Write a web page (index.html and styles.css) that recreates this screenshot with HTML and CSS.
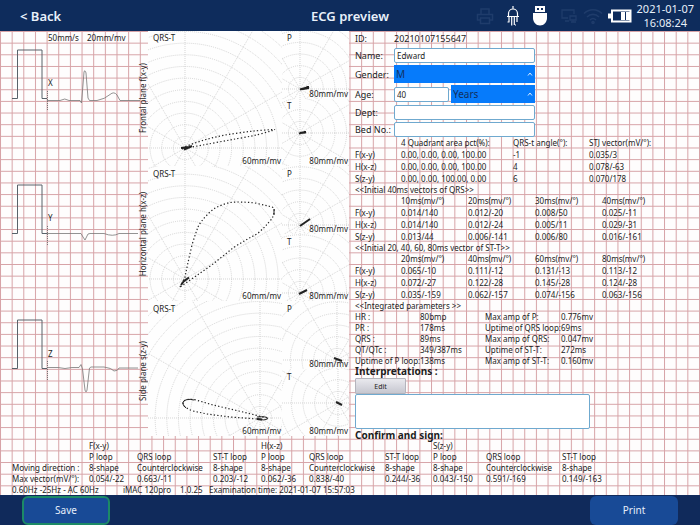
FILE: index.html
```html
<!DOCTYPE html>
<html lang="en">
<head>
    <meta charset="UTF-8">
    <meta name="viewport" content="width=device-width, initial-scale=1.0">
    <title>ECG preview</title>
    <link rel="stylesheet" href="styles.css">
</head>
<body>
    <header class="topbar">
        <a class="back" href="#">&lt; Back</a>
        <h1>ECG preview</h1>
        <div class="status">
            <svg class="dim spaced" width="18" height="18" viewBox="0 0 18 18" fill="none" stroke-width="1.500">
                <path d="M5 7V2h8v5M4 13H1.500V7.500h15V13H14M4.500 11h9v5.500h-9z"/>
            </svg>
            <svg class="lit spaced" width="14" height="20" viewBox="0 0 14 20" fill="none" stroke-width="1.200">
                <path d="M7 0v3M2.500 10V7.500a4.500 4.500 0 0 1 9 0V10M1 10.500h12M3 11v5M5.700 11v8.500M8.300 11v8M11 11v5M1.500 16h2M9 19h1"/>
            </svg>
            <svg class="lit spaced" width="16" height="20" viewBox="0 0 16 20">
                <path fill="#fff" stroke="none" d="M1 7h14v5c0 4-3 7.500-7 7.500S1 16 1 12z"/>
                <path fill="#fff" stroke="none" fill-rule="evenodd" d="M3 0h10v6H3zM5 2v2h2V2zM9 2v2h2V2z"/>
            </svg>
            <svg class="dim" width="18" height="18" viewBox="0 0 18 18" fill="none" stroke-width="1.300">
                <path d="M8 11H2V3h12v4M5 14h4M10 9h6v4h-6zM13 13v2M11 15h5"/>
            </svg>
            <svg class="dim" width="20" height="18" viewBox="0 0 20 18" fill="none" stroke-width="1.600">
                <path d="M1 6.500c5-5 13-5 18 0M4 10c3.500-3.500 8.500-3.500 12 0M7 13c2-2 4-2 6 0"/>
                <circle cx="10" cy="15.500" r="1"/>
            </svg>
            <svg class="lit" width="24" height="14" viewBox="0 0 24 14">
                <path fill="#fff" stroke="none" d="M0 4.500h3v5H0z"/>
                <rect x="4" y="1.500" width="18.500" height="11" fill="none" stroke-width="2"/>
                <path fill="#fff" stroke="none" d="M13 3h4v8h-4zM18 3h4v8h-4z"/>
            </svg>
            <time datetime="2021-01-07T16:08:24">2021-01-07<br>16:08:24</time>
        </div>
    </header>

    <main class="sheet">
        <svg class="paper" aria-hidden="true">
            <defs>
                <pattern id="mm" width="11.650" height="11.650" patternUnits="userSpaceOnUse">
                    <path d="M0 .5H11.650M.5 0V11.650"/>
                </pattern>
            </defs>
            <rect width="100%" height="100%" fill="url(#mm)"/>
        </svg>

        <div class="upper">
            <div class="planes">
                <!-- Frontal plane -->
                <svg class="lead" viewBox="0 0 148 135">
                    <text x="48" y="10">50mm/s</text>
                    <text x="87" y="10">20mm/mv</text>
                    <text x="48" y="55">X</text>
                    <path class="pulse" d="M12 67.500H17.500V19H42V67.500H47"/>
                    <path class="axis" d="M47.500 60V80"/>
                    <path class="wave" d="M47 69.500H60Q65 66.500 69 69.500H80L81.500 72L84 41Q85 38 86 42L88 67L89.500 69.500H97Q105 68 110 63.500Q114 60 117 64L120 69.500H140"/>
                    <text class="turned" transform="translate(146 67) rotate(-90)">Frontal plane f(x-y)</text>
                </svg>
                <svg class="plot" viewBox="0 0 134 135" data-cx="37" data-cy="117">
                    <path class="loop" d="M34 117Q60 106 87 102.500Q110 99 127 98.500Q112 104 90 107.500Q65 112 34 118"/>
                    <path class="blob" d="M33 117L42 116L36 118.500L44 115"/>
                    <text x="5" y="10">QRS-T</text>
                    <text class="end" x="133" y="133">60mm/mv</text>
                </svg>
                <div class="pair">
                    <svg class="plot" viewBox="0 0 67 68" data-cx="18" data-cy="58">
                        <path class="blob" d="M18 58.500L27 56L21 58L27 57"/>
                        <text x="5" y="10">P</text>
                        <text class="end" x="66" y="66">80mm/mv</text>
                    </svg>
                    <svg class="plot" viewBox="0 0 67 67" data-cx="18" data-cy="34">
                        <path class="blob" d="M17 34.500L24 33L18 34L24 33.500"/>
                        <text x="5" y="10">T</text>
                        <text class="end" x="66" y="65">80mm/mv</text>
                    </svg>
                </div>

                <!-- Horizontal plane -->
                <svg class="lead" viewBox="0 0 148 135">
                    <text x="48" y="55">Y</text>
                    <path class="pulse" d="M12 67.500H17.500V19H42V67.500H47"/>
                    <path class="axis" d="M47.500 60V80"/>
                    <path class="wave" d="M47 67.500H81L83 71L85 74L88 68L90 67.500H104Q113 71 119 67.500H138"/>
                    <text class="turned" transform="translate(146 68) rotate(-90)">Horizontal plane h(x-z)</text>
                </svg>
                <svg class="plot" viewBox="0 0 134 135" data-cx="37" data-cy="113">
                    <path class="loop" d="M32 121L37 111Q40 96 44 79Q47 69 50 61Q53 55 59 49Q65 42 74 39Q81 36 89 36Q98 36 107 37Q116 39 124 41Q127 42 126 46Q126 51 121 56Q116 62 109 68Q97 74 85 82L65 98L45 112Z"/>
                    <path class="blob" d="M33 119L36 115L41 111.500L35 116"/>
                    <path class="blob thin" d="M126 43V49"/>
                    <text x="5" y="11">QRS-T</text>
                    <text class="end" x="133" y="133">60mm/mv</text>
                </svg>
                <div class="pair">
                    <svg class="plot" viewBox="0 0 67 68" data-cx="18" data-cy="59">
                        <path class="blob" d="M18 60L28 53"/>
                        <text x="5" y="11">P</text>
                        <text class="end" x="66" y="66">80mm/mv</text>
                    </svg>
                    <svg class="plot" viewBox="0 0 67 67" data-cx="18" data-cy="59">
                        <path class="blob" d="M17 60L25 56"/>
                        <text x="5" y="11">T</text>
                        <text class="end" x="66" y="65">80mm/mv</text>
                    </svg>
                </div>

                <!-- Side plane -->
                <svg class="lead" viewBox="0 0 148 135">
                    <text x="48" y="56">Z</text>
                    <path class="pulse" d="M12 67.500H17.500V19H42V67.500H47"/>
                    <path class="axis" d="M47.500 60V80"/>
                    <path class="wave" d="M47 66.500H58Q65 68.500 72 66.500H79L81 63.500L82.500 68L85 89Q86 93 87 89L89.500 67L91 66H104Q112 67 114 70Q118 70 119 67H138"/>
                    <text class="turned" transform="translate(146 70) rotate(-90)">Side plane s(z-y)</text>
                </svg>
                <svg class="plot" viewBox="0 0 134 135" data-cx="112" data-cy="117">
                    <path class="loop" d="M119 117L95 111L65 104L48 99Q38 97 35 101Q34 106 45 110L59 113L82 116L109 118"/>
                    <path class="blob thin" d="M46 99Q38 97 35 101Q34 104 38 107M109 116Q119 115 120 117.500Q117 120 109 118"/>
                    <path class="blob" d="M109 118L114 118.500"/>
                    <text x="5" y="11">QRS-T</text>
                    <text class="end" x="133" y="133">60mm/mv</text>
                </svg>
                <div class="pair">
                    <svg class="plot" viewBox="0 0 67 68" data-cx="55" data-cy="59">
                        <path class="blob" d="M52 57L60 60"/>
                        <text x="5" y="11">P</text>
                        <text class="end" x="66" y="66">80mm/mv</text>
                    </svg>
                    <svg class="plot" viewBox="0 0 67 67" data-cx="56" data-cy="34">
                        <path class="blob" d="M54 33L60 36"/>
                        <text x="5" y="11">T</text>
                        <text class="end" x="66" y="65">80mm/mv</text>
                    </svg>
                </div>
            </div>

            <section class="details">
                <form class="patient">
                    <span>ID:</span>
                    <output class="pid">20210107155647</output>

                    <label for="name">Name:</label>
                    <input type="text" id="name" value="Edward">

                    <label for="gender">Gender:</label>
                    <div class="picker">
                        <select id="gender"><option>M</option><option>F</option></select>
                        <svg width="6" height="4" viewBox="0 0 6 4"><path d="M1 3.500L3 1L5 3.500"/></svg>
                    </div>

                    <label for="age">Age:</label>
                    <div class="age-row">
                        <input type="text" id="age" value="40">
                        <div class="picker">
                            <select aria-label="Age unit"><option>Years</option><option>Months</option></select>
                            <svg width="6" height="4" viewBox="0 0 6 4"><path d="M1 3.500L3 1L5 3.500"/></svg>
                        </div>
                    </div>

                    <label for="dept">Dept:</label>
                    <input type="text" id="dept">

                    <label for="bed">Bed No.:</label>
                    <input type="text" id="bed">
                </form>

                <table class="quadrants">
                    <tr class="head"><td></td><th>4 Quadrant area pct(%):</th><th>QRS-t angle(°):</th><th>STJ vector(mV/°):</th></tr>
                    <tr><th>F(x-y)</th><td>0.00, 0.00, 0.00, 100.00</td><td>-1</td><td>0.035/3</td></tr>
                    <tr><th>H(x-z)</th><td>0.00, 0.00, 0.00, 100.00</td><td>4</td><td>0.078/-63</td></tr>
                    <tr><th>S(z-y)</th><td>0.00, 0.00, 100.00, 0.00</td><td>6</td><td>0.070/178</td></tr>
                </table>

                <table class="vectors">
                    <caption>&lt;&lt;Initial 40ms vectors of QRS&gt;&gt;</caption>
                    <tr class="head"><td></td><th>10ms(mv/°)</th><th>20ms(mv/°)</th><th>30ms(mv/°)</th><th>40ms(mv/°)</th></tr>
                    <tr><th>F(x-y)</th><td>0.014/140</td><td>0.012/-20</td><td>0.008/50</td><td>0.025/-11</td></tr>
                    <tr><th>H(x-z)</th><td>0.014/140</td><td>0.012/-24</td><td>0.005/11</td><td>0.029/-31</td></tr>
                    <tr><th>S(z-y)</th><td>0.013/44</td><td>0.006/-141</td><td>0.006/80</td><td>0.016/-161</td></tr>
                </table>

                <table class="vectors">
                    <caption>&lt;&lt;Initial 20, 40, 60, 80ms vector of ST-T&gt;&gt;</caption>
                    <tr class="head"><td></td><th>20ms(mv/°)</th><th>40ms(mv/°)</th><th>60ms(mv/°)</th><th>80ms(mv/°)</th></tr>
                    <tr><th>F(x-y)</th><td>0.065/-10</td><td>0.111/-12</td><td>0.131/-13</td><td>0.113/-12</td></tr>
                    <tr><th>H(x-z)</th><td>0.072/-27</td><td>0.122/-28</td><td>0.145/-28</td><td>0.124/-28</td></tr>
                    <tr><th>S(z-y)</th><td>0.035/-159</td><td>0.062/-157</td><td>0.074/-156</td><td>0.063/-156</td></tr>
                </table>

                <table class="params">
                    <caption>&lt;&lt;Integrated parameters &gt;&gt;</caption>
                    <tr><th>HR :</th><td>80bmp</td><th>Max amp of P:</th><td>0.776mv</td></tr>
                    <tr><th>PR :</th><td>178ms</td><th>Uptime of QRS loop:</th><td>69ms</td></tr>
                    <tr><th>QRS :</th><td>89ms</td><th>Max amp of QRS:</th><td>0.047mv</td></tr>
                    <tr><th>QT/QTc :</th><td>349/387ms</td><th>Uptime of ST-T:</th><td>272ms</td></tr>
                    <tr><th>Uptime of P loop:</th><td>138ms</td><th>Max amp of ST-T:</th><td>0.160mv</td></tr>
                </table>

                <label class="title" for="notes">Interpretations :</label>
                <button class="edit" type="button">Edit</button>
                <textarea id="notes"></textarea>
                <h2 class="title">Confirm and sign:</h2>
            </section>
        </div>

        <table class="loops">
            <colgroup>
                <col class="name"><col class="p"><col class="qrs"><col class="st">
                <col class="p"><col class="qrs"><col class="st">
                <col class="p-wide"><col class="qrs"><col>
            </colgroup>
            <tr><td></td><th colspan="3">F(x-y)</th><th colspan="3">H(x-z)</th><th colspan="3">S(z-y)</th></tr>
            <tr><td></td><th>P loop</th><th>QRS loop</th><th>ST-T loop</th><th>P loop</th><th>QRS loop</th><th>ST-T loop</th><th>P loop</th><th>QRS loop</th><th>ST-T loop</th></tr>
            <tr><th>Moving direction :</th><td>8-shape</td><td>Counterclockwise</td><td>8-shape</td><td>8-shape</td><td>Counterclockwise</td><td>8-shape</td><td>8-shape</td><td>Counterclockwise</td><td>8-shape</td></tr>
            <tr><th>Max vector(mV/°):</th><td>0.054/-22</td><td>0.663/-11</td><td>0.203/-12</td><td>0.062/-36</td><td>0.838/-40</td><td>0.244/-36</td><td>0.043/-150</td><td>0.591/-169</td><td>0.149/-163</td></tr>
        </table>
        <div class="device">
            <span class="filter">0.60Hz -25Hz - AC 60Hz</span>
            <span class="model">iMAC 120pro</span>
            <span class="version">1.0.25</span>
            <span>Examination time: 2021-01-07 15:57:03</span>
        </div>
    </main>

    <footer class="actions">
        <button class="save" type="button">Save</button>
        <button type="button">Print</button>
    </footer>

    <script>
        const NS = 'http://www.w3.org/2000/svg';
        const STEP = 11.65;

        // polar grid behind each loop
        document.querySelectorAll('.plot').forEach(svg => {
            const cx = Number(svg.dataset.cx);
            const cy = Number(svg.dataset.cy);
            const g = document.createElementNS(NS, 'g');
            g.setAttribute('class', 'rings');
            for (let i = 1; i < 15; i++) {
                const c = document.createElementNS(NS, 'circle');
                c.setAttribute('cx', cx);
                c.setAttribute('cy', cy);
                c.setAttribute('r', i * STEP);
                g.appendChild(c);
            }
            for (let a = 0; a < 180; a += 30) {
                const dx = 200 * Math.cos(a * Math.PI / 180);
                const dy = 200 * Math.sin(a * Math.PI / 180);
                const l = document.createElementNS(NS, 'path');
                l.setAttribute('d', `M${cx - dx} ${cy - dy}L${cx + dx} ${cy + dy}`);
                g.appendChild(l);
            }
            svg.prepend(g);
        });
    </script>
</body>
</html>
```
FILE: styles.css
```css
* {
    box-sizing: border-box;
}
body {
    margin: 0;
    min-height: 100vh;
    display: flex;
    flex-direction: column;
    font-family: "Noto Sans", "Open Sans", sans-serif;
    font-size: 8px;
    line-height: 11px;
    color: #1c1c1c;
    background: #fefdfd;
}
input, select, textarea, button {
    font-family: inherit;
    color: inherit;
    margin: 0;
}

/* Top bar */
.topbar {
    display: grid;
    grid-template-columns: 1fr auto 1fr;
    align-items: center;
    height: 31px;
    padding: 0 6px 0 20px;
    background: #0e2c5c;
    color: #e8f0fa;
}
.topbar h1, .back {
    margin: 0;
    font-size: 13px;
    line-height: 16px;
    font-weight: 600;
    color: inherit;
    text-decoration: none;
}
.topbar h1 {
    padding-right: 14px;
}
.status {
    display: flex;
    justify-content: flex-end;
    align-items: center;
    gap: 5px;
}
.status time {
    font-size: 11px;
    line-height: 14px;
    text-align: center;
}
.spaced {
    margin-right: 7px;
}
.dim {
    stroke: #1f3c6b;
}
.lit {
    stroke: #fff;
}

/* Chart sheet */
.sheet {
    position: relative;
    flex: 1;
}
.paper {
    position: absolute;
    inset: 0;
    width: 100%;
    height: 100%;
}
.paper path {
    stroke: #d6a2a6;
    fill: none;
}
.upper, .loops, .device {
    position: relative;
}
.upper {
    display: flex;
    gap: 6px;
}
.planes {
    display: grid;
    grid-template-columns: 148px 134px 67px;
    align-content: start;
}
.planes svg {
    display: block;
    width: 100%;
    overflow: hidden;
}
.planes text {
    font-size: 8px;
    fill: #1c1c1c;
}
.planes .end {
    text-anchor: end;
}
.planes .turned {
    text-anchor: middle;
}
.plot {
    background: #fefefe;
}
.rings {
    fill: none;
    stroke: #c4c4c4;
    stroke-width: 0.7;
    stroke-dasharray: 1 1;
}
.pulse {
    fill: none;
    stroke: #58626a;
}
.wave {
    fill: none;
    stroke: #777;
    stroke-width: 0.8;
}
.axis {
    stroke: #777;
    stroke-dasharray: 1 1;
}
.loop {
    fill: none;
    stroke: #222;
    stroke-width: 1.2;
    stroke-dasharray: 1.3 2.2;
}
.blob {
    fill: none;
    stroke: #222;
    stroke-width: 2;
}
.thin {
    stroke-width: 1;
}

/* Patient form */
.details {
    flex: 1;
    display: flex;
    flex-direction: column;
    align-items: flex-start;
}
.patient {
    display: grid;
    grid-template-columns: 39px 141px;
    grid-template-rows: 15px 15px 18px 18px 15px 15px;
    row-gap: 2px;
    align-items: center;
    font-size: 9px;
}
.patient label {
    white-space: nowrap;
}
.pid {
    font-size: 9px;
}
.patient input, textarea {
    border: 1px solid #6fa9cf;
    border-radius: 2px;
    background: #fff;
}
.patient input {
    width: 100%;
    height: 15px;
    padding: 0 2px;
    font-size: 8px;
}
.age-row {
    display: grid;
    grid-template-columns: 55px 1fr;
    gap: 2px;
    align-items: center;
}
.picker {
    position: relative;
}
.picker select {
    display: block;
    appearance: none;
    width: 100%;
    height: 18px;
    padding: 0 2px;
    border: 0;
    border-radius: 0;
    background: #067bfb;
    color: #12305e;
    font-size: 10px;
}
.picker svg {
    position: absolute;
    right: 2px;
    top: 7px;
    fill: none;
    stroke: #d5e9ff;
}

/* Measurement tables */
table {
    border-collapse: collapse;
    table-layout: fixed;
    white-space: nowrap;
}
th, td {
    padding: 0;
    height: 12px;
    line-height: 11px;
    font-weight: normal;
    text-align: left;
}
.head th, .head td, .params th, .params td, .loops th, .loops td {
    height: 11px;
}
caption {
    text-align: left;
    line-height: 11px;
}
.quadrants, .vectors, .params {
    width: 314px;
}
.quadrants .head > :nth-child(1), .vectors .head > :nth-child(1) {
    width: 46px;
}
.quadrants .head > :nth-child(2) {
    width: 112px;
}
.quadrants .head > :nth-child(3) {
    width: 76px;
}
.params tr > :nth-child(1) {
    width: 65px;
}
.params tr > :nth-child(2) {
    width: 65px;
}
.params tr > :nth-child(3) {
    width: 76px;
}

.title {
    margin: 0;
    font-size: 10px;
    line-height: 10px;
    font-weight: 700;
}
.edit {
    width: 51px;
    height: 16px;
    margin-top: 2px;
    padding: 0;
    border: 1px solid #b4b4bc;
    border-radius: 1px;
    background: linear-gradient(#e9e9ee, #c6c7d0);
    font-size: 7px;
}
textarea {
    width: 68%;
    height: 35px;
    margin-bottom: 1px;
    resize: none;
}

/* Loop summary */
.loops {
    width: 100%;
    margin-left: 12px;
}
.loops .name {
    width: 77px;
}
.loops .p {
    width: 48px;
}
.loops .p-wide {
    width: 53px;
}
.loops .qrs {
    width: 76px;
}
.loops .st {
    width: 48px;
}
.device {
    display: flex;
    padding-left: 12px;
    white-space: nowrap;
}
.filter {
    width: 111px;
}
.model {
    width: 57px;
}
.version {
    width: 29px;
}

/* Bottom bar */
.actions {
    display: flex;
    justify-content: space-between;
    align-items: center;
    height: 30px;
    padding: 0 22px;
    background: #102a5b;
}
.actions button {
    width: 88px;
    height: 29px;
    border: 0;
    border-radius: 6px;
    background: #184a96;
    color: #e6eefa;
    font-size: 10px;
}
.actions .save {
    border: 2px solid #1c8a66;
}
```
